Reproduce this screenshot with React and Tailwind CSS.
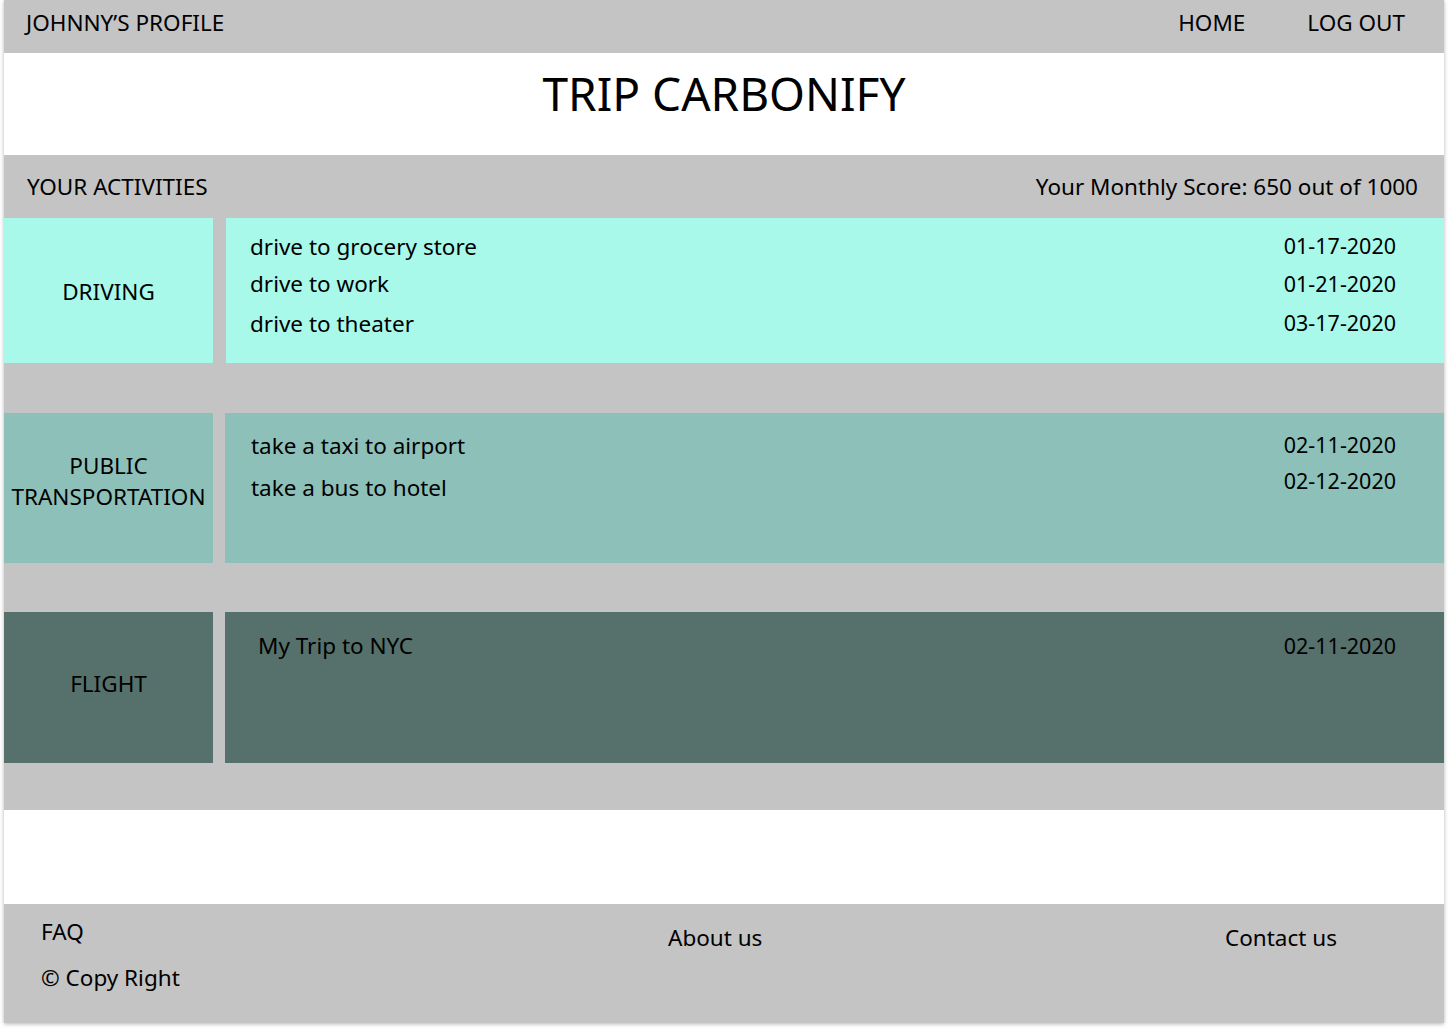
import React from "react";

const font = { fontFamily: '"Noto Sans", "Open Sans", sans-serif' };

export default function App() {
  return (
    <div className="min-h-[1032px] w-[1448px] bg-white text-black" style={font}>
      <div className="ml-[4px] w-[1440px] shadow-[0_1px_4px_rgba(0,0,0,0.3)]">
        {/* top bar */}
        <div className="flex h-[53px] items-start justify-between bg-[#c4c4c4] pl-[22px] pr-[39px] pt-[8px] text-[22.5px] leading-[30px]">
          <div>JOHNNY’S PROFILE</div>
          <div className="flex gap-[62px]">
            <span>HOME</span>
            <span>LOG OUT</span>
          </div>
        </div>

        {/* title */}
        <div className="flex h-[102px] justify-center bg-white pt-[12px] text-[46px] leading-[56px]">
          TRIP CARBONIFY
        </div>

        {/* activities header */}
        <div className="flex h-[63px] items-start justify-between bg-[#c4c4c4] pl-[23px] pr-[26px] pt-[17px] text-[22.5px] leading-[30px]">
          <div>YOUR ACTIVITIES</div>
          <div>Your Monthly Score: 650 out of 1000</div>
        </div>

        {/* rows */}
        <div className="flex flex-col bg-[#c4c4c4] text-[22.5px] leading-[30px]">
          {/* driving */}
          <div className="flex h-[145px] gap-[13px]">
            <div className="flex w-[209px] items-center justify-center bg-[#a9f9ea] pt-[2px]">DRIVING</div>
            <div className="flex flex-1 justify-between bg-[#a9f9ea] pl-[24px] pr-[48px]">
              <div className="flex flex-col pt-[14px]">
                <span>drive to grocery store</span>
                <span className="mt-[7px]">drive to work</span>
                <span className="mt-[10px]">drive to theater</span>
              </div>
              <div className="flex flex-col items-center pt-[13px] text-[21.5px]">
                <span>01-17-2020</span>
                <span className="mt-[8px]">01-21-2020</span>
                <span className="mt-[9px]">03-17-2020</span>
              </div>
            </div>
          </div>

          <div className="h-[50px]" />

          {/* public transportation */}
          <div className="flex h-[150px] gap-[12px]">
            <div className="flex w-[209px] items-start justify-center bg-[#8dc0b8] pt-[37px] text-center leading-[31px]">
              PUBLIC
              <br />
              TRANSPORTATION
            </div>
            <div className="flex flex-1 justify-between bg-[#8dc0b8] pl-[26px] pr-[48px]">
              <div className="flex flex-col pt-[18px]">
                <span>take a taxi to airport</span>
                <span className="mt-[12px]">take a bus to hotel</span>
              </div>
              <div className="flex flex-col items-center pt-[17px] text-[21.5px]">
                <span>02-11-2020</span>
                <span className="mt-[6px]">02-12-2020</span>
              </div>
            </div>
          </div>

          <div className="h-[49px]" />

          {/* flight */}
          <div className="flex h-[151px] gap-[12px]">
            <div className="flex w-[209px] items-center justify-center bg-[#56716b] pb-[7px]">FLIGHT</div>
            <div className="flex flex-1 justify-between bg-[#56716b] pl-[33px] pr-[48px]">
              <div className="pt-[19px]">My Trip to NYC</div>
              <div className="pt-[19px] text-[21.5px]">02-11-2020</div>
            </div>
          </div>

          <div className="h-[47px]" />
        </div>

        {/* spacer */}
        <div className="h-[94px] bg-white" />

        {/* footer */}
        <div className="flex h-[119px] bg-[#c4c4c4] pl-[37px] text-[22.5px] leading-[30px]">
          <div className="flex w-[627px] flex-col pt-[13px]">
            <span>FAQ</span>
            <span className="mt-[16px]">© Copy Right</span>
          </div>
          <div className="w-[557px] pt-[19px]">About us</div>
          <div className="pt-[19px]">Contact us</div>
        </div>
      </div>
    </div>
  );
}
